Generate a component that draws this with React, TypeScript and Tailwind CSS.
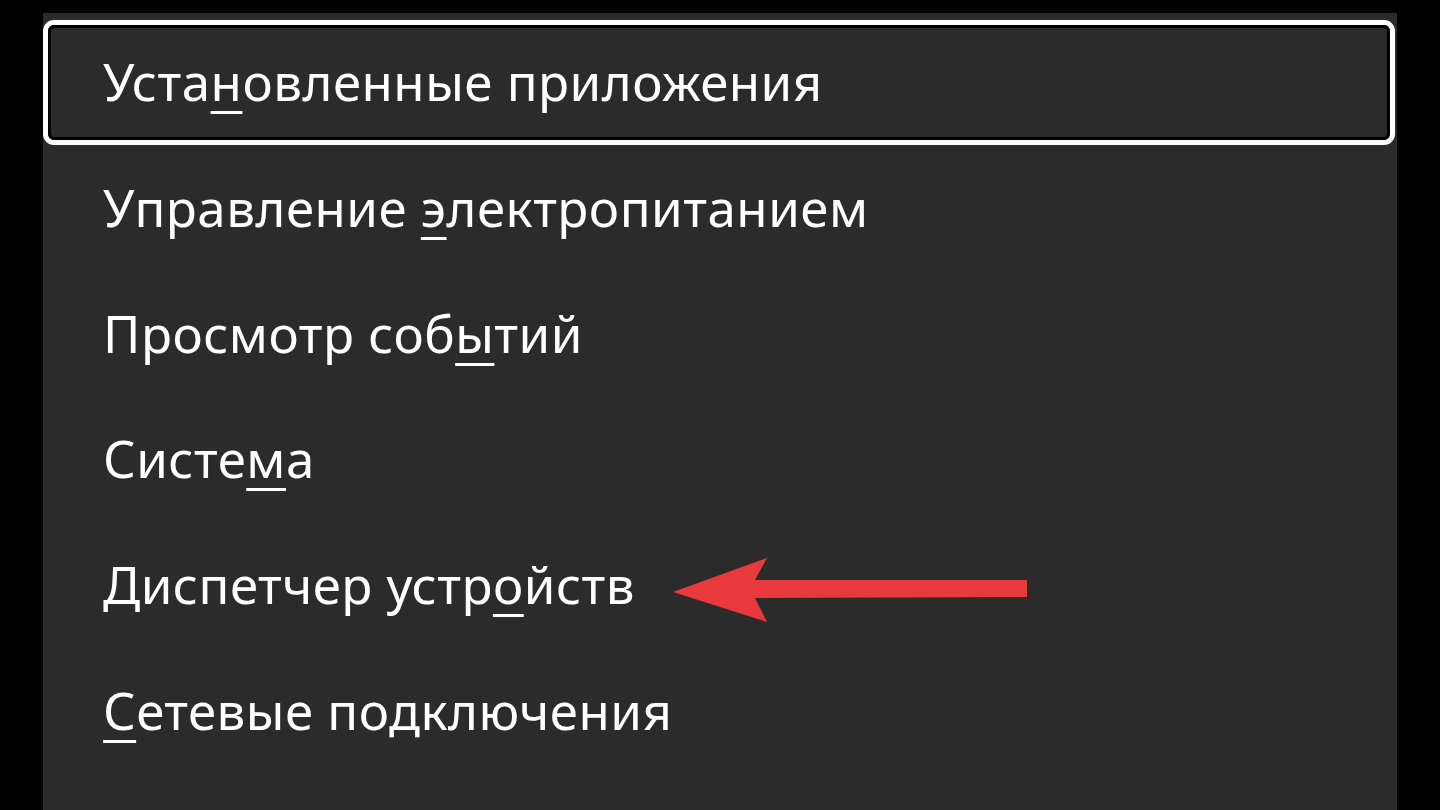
import React from 'react';

type Item = { before: string; key: string; after: string };

const items: Item[] = [
  { before: 'Уста', key: 'н', after: 'овленные приложения' },
  { before: 'Управление ', key: 'э', after: 'лектропитанием' },
  { before: 'Просмотр соб', key: 'ы', after: 'тий' },
  { before: 'Систе', key: 'м', after: 'а' },
  { before: 'Диспетчер устр', key: 'о', after: 'йств' },
  { before: '', key: 'С', after: 'етевые подключения' },
];

const Label: React.FC<{ item: Item }> = ({ item }) => (
  <span className="text-[51px] leading-none tracking-[0.5px] text-white whitespace-nowrap">
    {item.before}
    <span className="underline decoration-[3px] underline-offset-[10px]">{item.key}</span>
    {item.after}
  </span>
);

const App: React.FC = () => {
  return (
    <div className="w-[1440px] h-[810px] bg-black overflow-hidden font-['Noto_Sans',sans-serif]">
      <div className="relative ml-[43px] mt-[13px] w-[1354px] h-[797px] bg-[#2b2b2b] pt-[7px] pr-[2px]">
        <ul className="flex flex-col">
          {items.map((item, i) =>
            i === 0 ? (
              <li key={i} className="h-[125px] rounded-[11px] border-[5px] border-white">
                <div className="h-full rounded-[6px] border-[3px] border-black flex items-center pl-[52px] pb-[2px]">
                  <Label item={item} />
                </div>
              </li>
            ) : (
              <li key={i} className="h-[125.6px] flex items-center pl-[60px]">
                <Label item={item} />
              </li>
            )
          )}
        </ul>

        {/* red arrow pointing at Диспетчер устройств */}
        <svg
          className="absolute left-[628px] top-[543px]"
          width="360"
          height="70"
          viewBox="0 0 360 70"
        >
          <polygon
            points="2,36 96,2 84,24 356,24 356,41 84,42 96,66"
            fill="#e8393c"
          />
        </svg>
      </div>
    </div>
  );
};

export default App;
